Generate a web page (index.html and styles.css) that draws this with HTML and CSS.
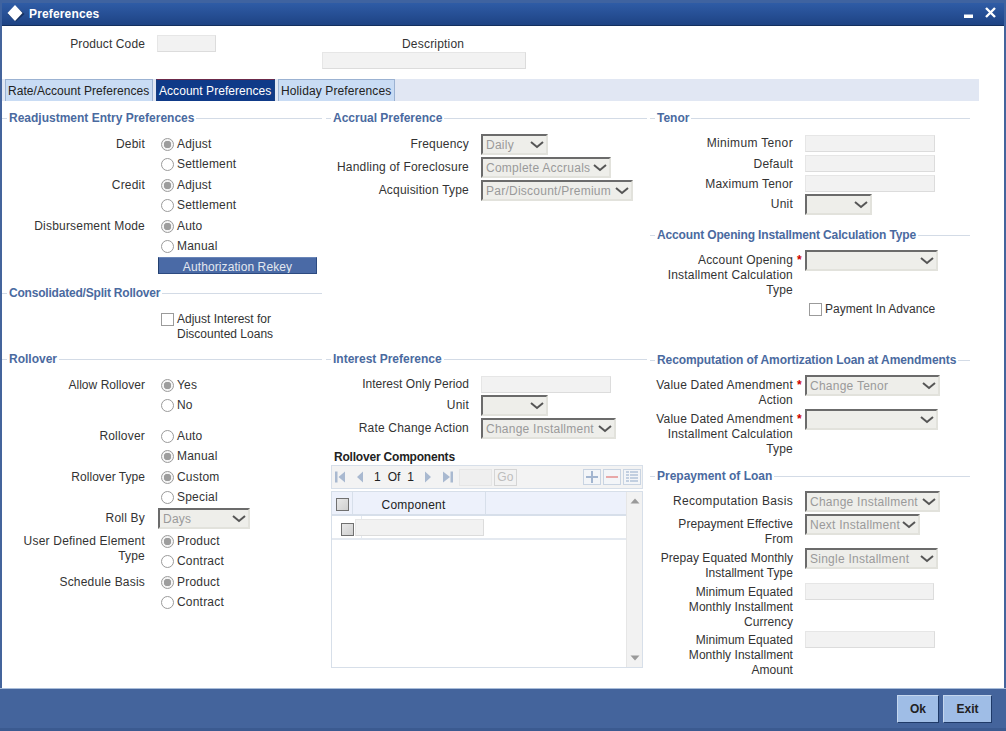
FILE: index.html
```html
<!DOCTYPE html>
<html lang="en">
<head>
<meta charset="utf-8">
<title>Preferences</title>
<link rel="stylesheet" href="styles.css">
</head>
<body>
<div class="window">
  <header class="titlebar">
    <svg class="logo" width="18" height="18" viewBox="0 0 18 18"><path d="M9 1.500 17.500 9 9 16.500 .5 9z" fill="#16315f"/><path d="M8 0 15.500 8 8 16 .5 8z" fill="#fff"/></svg>
    <span class="title">Preferences</span>
    <svg class="winbtn" width="48" height="16" viewBox="0 0 48 16"><path d="M12 8.500h9v3.500h-9z" fill="#fff"/><path d="M34 2l9 9M43 2l-9 9" stroke="#fff" stroke-width="2.400" fill="none"/></svg>
  </header>

  <main class="content">
    <div class="master">
      <span class="m-label">Product Code</span>
      <span class="input m-code"></span>
      <div class="m-desc">
        <span class="m-desc-label">Description</span>
        <span class="input m-desc-input"></span>
      </div>
    </div>

    <nav class="tabs">
      <span class="tab">Rate/Account Preferences</span>
      <span class="tab active">Account Preferences</span>
      <span class="tab">Holiday Preferences</span>
    </nav>

    <div class="columns">
      <section class="col col1">
        <h2 class="head"><span>Readjustment Entry Preferences</span></h2>
        <div class="g6"></div>
        <div class="row r20"><label class="lbl">Debit</label><span class="opt"><i class="radio on"></i>Adjust</span></div>
        <div class="row r21"><label class="lbl"></label><span class="opt"><i class="radio"></i>Settlement</span></div>
        <div class="row r20"><label class="lbl">Credit</label><span class="opt"><i class="radio on"></i>Adjust</span></div>
        <div class="row r21"><label class="lbl"></label><span class="opt"><i class="radio"></i>Settlement</span></div>
        <div class="row r20"><label class="lbl">Disbursement Mode</label><span class="opt"><i class="radio on"></i>Auto</span></div>
        <div class="row r21"><label class="lbl"></label><span class="opt"><i class="radio"></i>Manual</span></div>
        <div class="rekey-row"><span class="rekey">Authorization Rekey</span></div>
        <h2 class="head g10"><span class="t1">Consolidated/Split Rollover</span></h2>
        <div class="row check-row"><span class="opt opt-wrap"><i class="check"></i><span>Adjust Interest for<br>Discounted Loans</span></span></div>
        <h2 class="head rollover-head"><span>Rollover</span></h2>
        <div class="g6"></div>
        <div class="row r20"><label class="lbl tight">Allow Rollover</label><span class="opt"><i class="radio on"></i>Yes</span></div>
        <div class="row r31"><label class="lbl"></label><span class="opt"><i class="radio"></i>No</span></div>
        <div class="row r20"><label class="lbl">Rollover</label><span class="opt"><i class="radio"></i>Auto</span></div>
        <div class="row r21"><label class="lbl"></label><span class="opt"><i class="radio on"></i>Manual</span></div>
        <div class="row r20"><label class="lbl tight">Rollover Type</label><span class="opt"><i class="radio on"></i>Custom</span></div>
        <div class="row r21"><label class="lbl"></label><span class="opt"><i class="radio"></i>Special</span></div>
        <div class="row r23"><label class="lbl lp3">Roll By</label><span class="sel w92 dim">Days<svg width="14" height="8" viewBox="0 0 14 8"><path d="M1 1l6 5 6-5" fill="none" stroke="#555" stroke-width="2"/></svg></span></div>
        <div class="row r20"><label class="lbl">User Defined Element<br>Type</label><span class="opt"><i class="radio on"></i>Product</span></div>
        <div class="row r21"><label class="lbl"></label><span class="opt"><i class="radio"></i>Contract</span></div>
        <div class="row r20"><label class="lbl">Schedule Basis</label><span class="opt"><i class="radio on"></i>Product</span></div>
        <div class="row r21"><label class="lbl"></label><span class="opt"><i class="radio"></i>Contract</span></div>
      </section>

      <section class="col col2">
        <h2 class="head"><span>Accrual Preference</span></h2>
        <div class="g6"></div>
        <div class="row r23"><label class="lbl lp3">Frequency</label><span class="sel w67 dim">Daily<svg width="14" height="8" viewBox="0 0 14 8"><path d="M1 1l6 5 6-5" fill="none" stroke="#555" stroke-width="2"/></svg></span></div>
        <div class="row r23"><label class="lbl lp3">Handling of Foreclosure</label><span class="sel w130 dim">Complete Accruals<svg width="14" height="8" viewBox="0 0 14 8"><path d="M1 1l6 5 6-5" fill="none" stroke="#555" stroke-width="2"/></svg></span></div>
        <div class="row r23"><label class="lbl lp3">Acquisition Type</label><span class="sel w152 dim">Par/Discount/Premium<svg width="14" height="8" viewBox="0 0 14 8"><path d="M1 1l6 5 6-5" fill="none" stroke="#555" stroke-width="2"/></svg></span></div>
        <h2 class="head interest-head"><span>Interest Preference</span></h2>
        <div class="g7"></div>
        <div class="row r19"><label class="lbl lp1 tight">Interest Only Period</label><span class="input w130"></span></div>
        <div class="row r23"><label class="lbl lp3">Unit</label><span class="sel w67 dim"><svg width="14" height="8" viewBox="0 0 14 8"><path d="M1 1l6 5 6-5" fill="none" stroke="#555" stroke-width="2"/></svg></span></div>
        <div class="row r23"><label class="lbl lp3">Rate Change Action</label><span class="sel w135 dim">Change Installment<svg width="14" height="8" viewBox="0 0 14 8"><path d="M1 1l6 5 6-5" fill="none" stroke="#555" stroke-width="2"/></svg></span></div>
        <h3 class="grid-title">Rollover Components</h3>
        <div class="grid">
          <div class="toolbar">
            <svg class="pager" width="30" height="14" viewBox="0 0 30 14"><path d="M0 1.500h2.500v11H0zM10 1.500v11L3.500 7zM28 1.500v11L22 7z" fill="#a9b9d0"/></svg>
            <span class="of"><span>1</span><span>Of</span><span>1</span></span>
            <svg class="pager" width="30" height="14" viewBox="0 0 30 14"><path d="M1 1.500v11L7 7zM19 1.500v11L26 7zM26.500 1.500H29v11h-2.500z" fill="#a9b9d0"/></svg>
            <span class="goinput"></span>
            <span class="go">Go</span>
            <span class="tools">
              <span class="tool"><svg width="14" height="14" viewBox="0 0 14 14"><path d="M1 7h12M7 1v12" stroke="#a3b5cf" stroke-width="2"/></svg></span>
              <span class="tool"><svg width="14" height="14" viewBox="0 0 14 14"><path d="M1 7h12" stroke="#e8a8a8" stroke-width="2"/></svg></span>
              <span class="tool"><svg width="14" height="14" viewBox="0 0 14 14"><path d="M1 2h3M1 5h3M1 8h3M1 11h3M5 2h8M5 5h8M5 8h8M5 11h8" stroke="#b3c2d8" stroke-width="1.500"/></svg></span>
            </span>
          </div>
          <div class="table">
            <div class="tmain">
              <div class="thead">
                <span class="th-check"><i class="gcheck"></i></span>
                <span class="th-comp">Component</span>
              </div>
              <div class="trow">
                <span class="td-check"><i class="gcheck"></i></span>
                <span class="input td-input"></span>
              </div>
            </div>
            <div class="scroll">
              <svg width="10" height="6" viewBox="0 0 10 6"><path d="M5 .5 9.500 5.500H.5z" fill="#9a9a9a"/></svg>
              <svg width="10" height="6" viewBox="0 0 10 6"><path d="M5 5.500 9.500 .5H.5z" fill="#9a9a9a"/></svg>
            </div>
          </div>
        </div>
      </section>

      <section class="col col3">
        <h2 class="head"><span>Tenor</span></h2>
        <div class="g7"></div>
        <div class="row r20"><label class="lbl lp1 wide">Minimum Tenor</label><span class="input w130"></span></div>
        <div class="row r20"><label class="lbl lp2">Default</label><span class="input w130"></span></div>
        <div class="row r19"><label class="lbl lp2">Maximum Tenor</label><span class="input w130"></span></div>
        <div class="row r21"><label class="lbl lp3">Unit</label><span class="sel w67"><svg width="14" height="8" viewBox="0 0 14 8"><path d="M1 1l6 5 6-5" fill="none" stroke="#555" stroke-width="2"/></svg></span></div>
        <h2 class="head g10"><span class="t2">Account Opening Installment Calculation Type</span></h2>
        <div class="g5"></div>
        <div class="row r48"><label class="lbl lp3">Account Opening<br>Installment Calculation<br>Type</label><b class="req">*</b><span class="sel w133"><svg width="14" height="8" viewBox="0 0 14 8"><path d="M1 1l6 5 6-5" fill="none" stroke="#555" stroke-width="2"/></svg></span></div>
        <div class="row payment"><span class="opt"><i class="check"></i>Payment In Advance</span></div>
        <h2 class="head"><span class="t3">Recomputation of Amortization Loan at Amendments</span></h2>
        <div class="g5"></div>
        <div class="row r34"><label class="lbl lp3">Value Dated Amendment<br>Action</label><b class="req">*</b><span class="sel w135 dim">Change Tenor<svg width="14" height="8" viewBox="0 0 14 8"><path d="M1 1l6 5 6-5" fill="none" stroke="#555" stroke-width="2"/></svg></span></div>
        <div class="row r57"><label class="lbl lp3">Value Dated Amendment<br>Installment Calculation<br>Type</label><b class="req">*</b><span class="sel w133"><svg width="14" height="8" viewBox="0 0 14 8"><path d="M1 1l6 5 6-5" fill="none" stroke="#555" stroke-width="2"/></svg></span></div>
        <h2 class="head"><span>Prepayment of Loan</span></h2>
        <div class="g5"></div>
        <div class="row r23"><label class="lbl lp3 wide">Recomputation Basis</label><span class="sel w135 dim">Change Installment<svg width="14" height="8" viewBox="0 0 14 8"><path d="M1 1l6 5 6-5" fill="none" stroke="#555" stroke-width="2"/></svg></span></div>
        <div class="row r34"><label class="lbl lp3 tight">Prepayment Effective<br>From</label><span class="sel w115 dim">Next Installment<svg width="14" height="8" viewBox="0 0 14 8"><path d="M1 1l6 5 6-5" fill="none" stroke="#555" stroke-width="2"/></svg></span></div>
        <div class="row r35"><label class="lbl lp3 tight">Prepay Equated Monthly<br>Installment Type</label><span class="sel w133 dim">Single Installment<svg width="14" height="8" viewBox="0 0 14 8"><path d="M1 1l6 5 6-5" fill="none" stroke="#555" stroke-width="2"/></svg></span></div>
        <div class="row r48"><label class="lbl lp2 tight">Minimum Equated<br>Monthly Installment<br>Currency</label><span class="input w129"></span></div>
        <div class="row r48"><label class="lbl lp2 tight">Minimum Equated<br>Monthly Installment<br>Amount</label><span class="input w130"></span></div>
      </section>
    </div>
  </main>

  <footer class="footer">
    <button class="btn ok" type="button">Ok</button>
    <button class="btn exit" type="button">Exit</button>
  </footer>
</div>
</body>
</html>
```
FILE: styles.css
```css
* { box-sizing: border-box; }
html, body { margin: 0; padding: 0; }
body {
  width: 1006px; height: 731px; overflow: hidden;
  font: 12px/15px "Liberation Sans", Arial, sans-serif;
  letter-spacing: .2px;
  color: #333;
  background: #44649c;
}
.window { display: flex; flex-direction: column; height: 731px; }

.titlebar {
  flex: none; height: 26px; margin: 0 2px;
  display: flex; align-items: center; padding: 3px 0 0 5px;
  border-top: 3px solid #3f63a0; border-bottom: 1px solid #132f5e;
  background: linear-gradient(#2f5ca6, #1e4384);
  box-shadow: -2px 0 0 #3f63a0, 2px 0 0 #3f63a0;
}
.logo { margin-top: -3px; flex: none; }
.title { margin: -3px 0 0 4px; font-weight: bold; color: #fff; letter-spacing: .15px; }
.winbtn { margin: -4px 4px 0 auto; }

.content {
  flex: none; height: 662px; margin: 0 2px; padding-top: 11px;
  background: #fff; overflow: hidden;
}
.master { display: flex; height: 42px; align-items: flex-start; }
.m-label { width: 143px; text-align: right; letter-spacing: .12px; }
.input { display: block; height: 17px; background: #f2f2f2; border: 1px solid #e6e6e6; border-right-color: #dcdcdc; border-bottom-color: #dcdcdc; flex: none; }
.m-code { width: 59px; margin-left: 12px; margin-top: -2px; }
.m-desc { margin-left: 106px; }
.m-desc-label { display: block; margin-left: 80px; height: 15px; }
.m-desc-input { width: 204px; }

.tabs {
  height: 22px; width: 977px; padding-left: 3px;
  display: flex; gap: 3px; background: #e1e7f3;
}
.tab {
  height: 22px; padding: 4px 0 0 2px; background: #c9dcf4; color: #222;
  border: 1px solid #9bb2d2; border-bottom: 0; white-space: nowrap;
  width: 148px; letter-spacing: .05px;
}
.tab.active { width: 119px; background: #0f3a88; color: #fff; border-color: #163e80; border-top-color: #6b2a4a; }
.tab:last-child { width: 117px; letter-spacing: .12px; }

.columns { display: flex; align-items: flex-start; margin-top: 7px; }
.col { flex: none; }
.col1 { width: 323px; }
.col2 { width: 325px; padding-left: 1px; }
.col3 { width: 321px; }

.head {
  height: 20px; margin: 0 3px 0 0; padding-top: 1px; display: flex; align-items: center;
  font-size: 12px; font-weight: bold; color: #4a6aa0; letter-spacing: 0;
}
.col3 .head { margin-right: 1px; }
.head::before { content: ""; width: 5px; height: 1.500px; background: #d3dbe6; margin-right: 2px; flex: none; }
.head::after { content: ""; flex: 1; height: 1.500px; background: #d3dbe6; margin-left: 2px; }
.head span { white-space: nowrap; }
.head .t1 { letter-spacing: -.2px; }
.head .t2 { letter-spacing: -.14px; }
.head .t3 { letter-spacing: -.08px; }
.head.g10 { margin-top: 10px; }
.head.rollover-head { margin-top: 1px; }
.head.interest-head { margin-top: 146px; }
.g5 { height: 5px; }
.g6 { height: 6px; }
.g7 { height: 7px; }

.row { display: flex; align-items: flex-start; }
.r19 { height: 19px; } .r20 { height: 20px; } .r21 { height: 21px; } .r23 { height: 23px; }
.r31 { height: 31px; } .r34 { height: 34px; } .r35 { height: 35px; }
.r48 { height: 48px; } .r57 { height: 57px; }

.lbl { flex: none; width: 143px; margin-right: 13px; text-align: right; white-space: nowrap; padding-top: 3px; }
.col2 .lbl, .col3 .lbl { margin-right: 12px; }
.lbl.lp1 { padding-top: 1px; }
.lbl.lp2 { padding-top: 2px; }
.lbl.lp3 { padding-top: 3px; }
.lbl.tight { letter-spacing: .04px; }
.lbl.wide { letter-spacing: .35px; }
.req { flex: none; width: 7px; margin-left: -8px; margin-right: 1px; color: #c00; font-weight: bold; padding-top: 3px; }

.opt { display: flex; align-items: flex-start; padding-left: 3px; padding-top: 3px; white-space: nowrap; }
.radio, .check { display: block; flex: none; width: 13px; height: 13px; margin-right: 3px; margin-top: 1px; background: #fff; border: 1px solid #9b9b9b; }
.radio { border-radius: 50%; }
.radio.on { background: radial-gradient(circle, #9d9d9d 0, #9d9d9d 3.500px, #f4f4f4 4px); }

.rekey-row { padding-left: 156px; height: 16px; }
.rekey {
  display: block; width: 159px; height: 17px; line-height: 19px; text-align: center; overflow: hidden; letter-spacing: .1px;
  background: #4a6aa6; color: #e3e8f0; border: 1px solid #2c4a80; border-top-color: #6a86b8; border-left-color: #23406f;
}
.check-row { height: 45px; padding-left: 156px; padding-top: 6px; }
.opt-wrap { letter-spacing: 0; }
.sel {
  flex: none; display: flex; align-items: center;
  height: 21px; padding: 1px 2px 0 3px; letter-spacing: .25px;
  background: #eeeeea; color: #333;
  border: 2px solid; border-color: #6b6b6b #e2e2dc #e2e2dc #6b6b6b;
  white-space: nowrap; overflow: hidden;
}
.sel.dim { color: #9a9a9a; }
.sel svg { flex: none; margin-left: auto; margin-top: -1px; }
.w67 { width: 67px; } .w92 { width: 92px; } .w115 { width: 115px; } .w129 { width: 129px; }
.w130 { width: 130px; } .w133 { width: 133px; } .w135 { width: 135px; } .w152 { width: 152px; }

.grid-title { margin: 9px 0 0 8px; height: 15px; font-size: 12px; line-height: 15px; font-weight: bold; color: #222; letter-spacing: -.2px; }
.grid { width: 312px; margin-left: 5px; }
.toolbar {
  height: 24px; display: flex; align-items: center;
  background: #f3f3f3; border: 1px solid #d7dfe9; padding-left: 3px;
}
.pager { flex: none; }
.of { display: flex; gap: 7px; width: 50px; margin-left: 9px; color: #222; letter-spacing: 0; }
.goinput { width: 33px; height: 17px; background: #efefef; border: 1px solid #e6e6e6; margin-left: 5px; }
.go { width: 23px; height: 17px; margin-left: 2px; border: 1px solid #d5d5d5; background: #f2f2f2; color: #bdbdbd; text-align: center; line-height: 15px; }
.tools { margin-left: auto; display: flex; gap: 2px; padding-right: 1px; }
.tool { width: 18px; height: 16px; border: 1px solid #c9d4e2; background: #f3f5f8; display: flex; align-items: center; justify-content: center; }

.table {
  height: 177px; margin-top: 2px; display: flex;
  border: 1px solid #d7dfe9; background: #fff;
}
.tmain { flex: 1; }
.thead { height: 24px; display: flex; background: #edf1fb; border-bottom: 2px solid #d7dfea; }
.th-check { width: 21px; border-right: 1px solid #d7dfea; padding: 6px 0 0 4px; }
.th-comp { width: 133px; border-right: 1px solid #d7dfea; text-align: center; line-height: 26px; padding-right: 11px; color: #222; }
.gcheck { display: block; width: 13px; height: 13px; background: linear-gradient(135deg, #e8e8e8, #cfcfcf); border: 1px solid #707070; }
.trow { height: 24px; display: flex; border-bottom: 2px solid #e4e9f0; }
.td-check { width: 30px; padding: 7px 0 0 9px; border-right: 1px solid #e4e9f0; flex: none; }
.td-input { width: 129px; margin: 3px 0 0 -7px; position: relative; }
.scroll {
  flex: none; width: 16px; background: #f2f2f2; border-left: 1px solid #e6e6e6;
  display: flex; flex-direction: column; justify-content: space-between; align-items: center; padding: 6px 0;
}

.payment { padding-left: 159px; height: 52px; padding-top: 1px; letter-spacing: 0; }
.payment .opt { padding-left: 0; }

.footer {
  flex: 1; display: flex; justify-content: flex-end; gap: 4px;
  padding: 6px 14px 0 0; background: #44649c; border-top: 1px solid #a9bdd9;
  box-shadow: inset 0 -3px 0 #3b5a90;
}
.btn {
  font: bold 12px "Liberation Sans", Arial, sans-serif; color: #222;
  height: 28px; padding: 0; background: #9fbde6;
  border: 1px solid; border-color: #c4d6ee #1f3a68 #1f3a68 #c4d6ee;
}
.ok { width: 42px; }
.exit { width: 49px; }
```
